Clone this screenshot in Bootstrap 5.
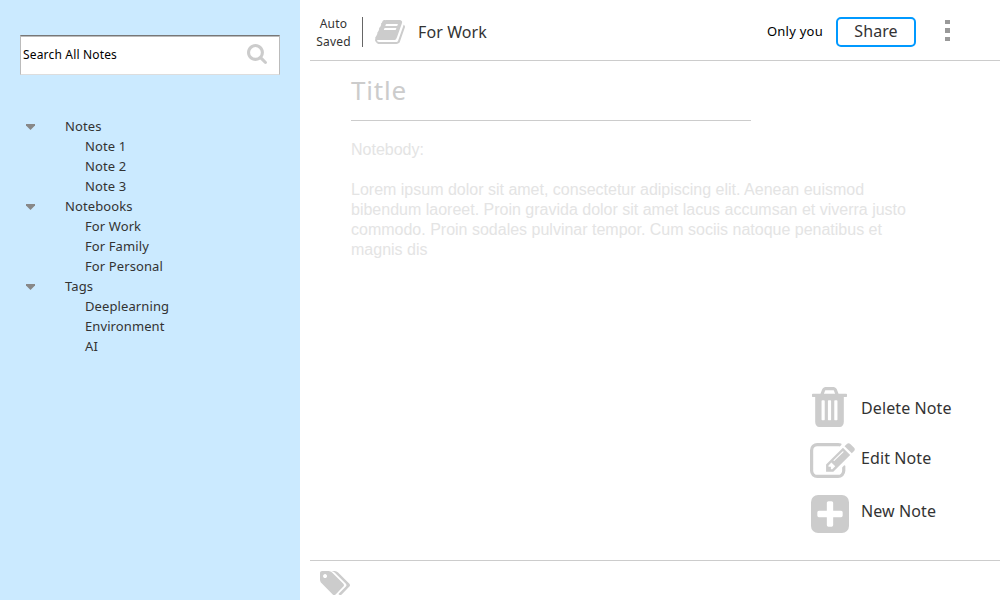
<!DOCTYPE html>
<html lang="en">
<head>
<meta charset="utf-8">
<meta name="viewport" content="width=device-width, initial-scale=1">
<title>Notes</title>
<link href="https://cdn.jsdelivr.net/npm/bootstrap@5.3.0/dist/css/bootstrap.min.css" rel="stylesheet">
<style>
body{font-family:"Noto Sans","Open Sans",sans-serif;font-size:13px;line-height:20px;color:#333;background:#fff}
svg{display:block;fill:#ccc;flex:none}
.sidebar{width:300px;background:#cbeaff;padding:35px 20px 0}
.search-box{height:40px;border:1px solid #bbb;border-top:1px solid #777;border-bottom-color:#ddd;padding:0 12px 2px 2px;box-shadow:inset 0 1px #bbb}
.search-box input{font-size:12px;letter-spacing:.17px;color:#000;outline:0;min-width:0;margin-top:2px}
.search-box input::placeholder{color:#000;opacity:1}
.tree{margin-top:41px;letter-spacing:.1px}
.tree summary{list-style:none;padding-left:45px;position:relative}
.tree summary::before{content:"";position:absolute;left:6px;top:8px;width:9px;height:6px;background:#888;clip-path:polygon(0 0,100% 0,100% 25%,50% 100%,0 25%)}
.tree li{padding-left:65px}
.workspace{margin-left:10px;min-width:0}
.topbar{height:61px;border-bottom:1px solid #ccc}
.autosave{width:47px;font-size:12px;line-height:18px;letter-spacing:.2px;padding-top:15px}
.rule{width:1px;height:30px;background:#666;margin:17px 12px 0 5px}
.book-ico{margin-top:20px}
.notebook{font-size:16px;margin:22px 0 0 13px;letter-spacing:.1px}
.only{font-size:13px;color:#000;margin-top:21px;letter-spacing:.25px}
.share{width:80px;height:30px;border:2px solid #09f!important;border-radius:5px;margin:17px 29px 0 13px;font-size:16px;line-height:24px;padding:0 0 2px;color:#333;letter-spacing:.1px}
.kebab{gap:4.2px;margin:20px 50px 0 0;width:5px}
.kebab i{height:4.3px;background:#999}
.page{padding-left:41px}
.title{width:400px;height:60px;border-bottom:1px solid #ccc;font-size:26px;font-weight:400;line-height:58px;color:#ccc;letter-spacing:.8px}
.note-text{width:570px;margin-top:19px;font-family:"Liberation Sans",sans-serif;font-size:16px;color:#e4e4e4}
.actions{margin:0 0 27px 500px;font-size:16px}
.action{color:#333;letter-spacing:.1px;text-align:left}
.ico{width:51px}
.trash-ico{margin-left:2px}
.plus-ico{margin-left:1px}
.delete-label{margin-top:11px}
.edit-label{margin-top:5px}
.new-label{margin-top:6px}
.action-new{margin-top:17px}
.tagbar{height:40px;border-top:1px solid #ccc;padding:10px}
</style>
</head>
<body class="d-flex vh-100 overflow-hidden">
<aside class="sidebar flex-shrink-0">
  <div class="search-box bg-white d-flex align-items-center">
    <input class="border-0 p-0 bg-transparent flex-grow-1" type="text" placeholder="Search All Notes">
    <svg width="20" height="20" viewBox="0 128 1664 1664"><path d="M1152 832q0-185-131.5-316.5T704 384 387.5 515.5 256 832t131.5 316.5T704 1280t316.5-131.5T1152 832zm512 832q0 52-38 90t-90 38q-54 0-90-38l-343-342q-179 124-399 124-143 0-273.5-55.5t-225-150-150-225T0 832t55.5-273.5 150-225 225-150T704 128t273.5 55.5 225 150 150 225T1408 832q0 220-124 399l343 343q37 37 37 90z"/></svg>
  </div>
  <nav class="tree">
    <details open><summary>Notes</summary><ul class="list-unstyled mb-0"><li>Note 1</li><li>Note 2</li><li>Note 3</li></ul></details>
    <details open><summary>Notebooks</summary><ul class="list-unstyled mb-0"><li>For Work</li><li>For Family</li><li>For Personal</li></ul></details>
    <details open><summary>Tags</summary><ul class="list-unstyled mb-0"><li>Deeplearning</li><li>Environment</li><li>AI</li></ul></details>
  </nav>
</aside>
<main class="workspace flex-grow-1 d-flex flex-column">
  <header class="topbar d-flex align-items-start">
    <div class="autosave text-center">Auto<br>Saved</div>
    <div class="rule"></div>
    <svg class="book-ico" width="30" height="24" viewBox="62 128 1668 1536" preserveAspectRatio="none"><path d="M1703 478q40 57 18 129l-275 906q-19 64-76.5 107.5t-122.5 43.5h-923q-77 0-148.5-53.5t-99.5-131.5q-24-67-2-127 0-4 3-27t4-37q1-8-3-21.5t-3-19.5q2-11 8-21t16.5-23.5 16.5-23.5q23-38 45-91.5t30-91.5q3-10 .5-30t-.5-28q3-11 17-28t17-23q21-36 42-92t25-90q1-9-2.5-32t.5-28q4-13 22-30.5t22-22.5q19-26 42.5-84.5t27.5-96.5q1-8-3-25.5t-2-26.5q2-8 9-18t18-23 17-21q8-12 16.5-30.5t15-35 16-36 19.5-32 26.5-23.5 36-11.5 47.5 5.5l-1 3q38-9 51-9h761q74 0 114 56t18 130l-274 906q-36 119-71.5 153.5t-128.5 34.5h-869q-27 0-38 15-11 16-1 43 24 70 144 70h923q29 0 56-15.5t35-41.5l300-987q7-22 5-57 38 15 59 43zm-1064 2q-4 13 2 22.5t20 9.5h608q13 0 25.5-9.5t16.5-22.5l21-64q4-13-2-22.5t-20-9.5h-608q-13 0-25.5 9.5t-16.5 22.5zm-83 256q-4 13 2 22.5t20 9.5h608q13 0 25.5-9.5t16.5-22.5l21-64q4-13-2-22.5t-20-9.5h-608q-13 0-25.5 9.5t-16.5 22.5z"/></svg>
    <div class="notebook">For Work</div>
    <div class="only ms-auto">Only you</div>
    <button class="share btn">Share</button>
    <div class="kebab d-flex flex-column"><i></i><i></i><i></i></div>
  </header>
  <section class="page flex-grow-1">
    <h1 class="title mb-0">Title</h1>
    <div class="note-text">Notebody:<br><br>Lorem ipsum dolor sit amet, consectetur adipiscing elit. Aenean euismod<br>bibendum laoreet. Proin gravida dolor sit amet lacus accumsan et viverra justo<br>commodo. Proin sodales pulvinar tempor. Cum sociis natoque penatibus et<br>magnis dis</div>
  </section>
  <div class="actions d-flex flex-column">
    <button class="action border-0 bg-transparent p-0 d-flex align-items-start"><span class="ico"><svg class="trash-ico" width="35" height="40" viewBox="0 128 1408 1536" preserveAspectRatio="none"><path d="M512 1376V672q0-14-9-23t-23-9h-64q-14 0-23 9t-9 23v704q0 14 9 23t23 9h64q14 0 23-9t9-23zm256 0V672q0-14-9-23t-23-9h-64q-14 0-23 9t-9 23v704q0 14 9 23t23 9h64q14 0 23-9t9-23zm256 0V672q0-14-9-23t-23-9h-64q-14 0-23 9t-9 23v704q0 14 9 23t23 9h64q14 0 23-9t9-23zM480 384h448l-48-117q-7-9-17-11H546q-10 2-17 11zm928 32v64q0 14-9 23t-23 9h-96v948q0 83-47 143.5t-113 60.5H288q-66 0-113-58.5T128 1464V512H32q-14 0-23-9t-9-23v-64q0-14 9-23t23-9h309l70-167q15-37 54-63t79-26h320q40 0 79 26t54 63l70 167h309q14 0 23 9t9 23z"/></svg></span><span class="delete-label">Delete Note</span></button>
    <button class="action border-0 bg-transparent p-0 mt-3 d-flex align-items-start"><span class="ico"><svg width="45" height="35" viewBox="0 128 1792 1408" preserveAspectRatio="none"><path d="M888 1184l116-116-152-152-116 116v56h96v96h56zm440-720q-16-16-33 1l-350 350q-17 17-1 33t33-1l350-350q17-17 1-33zm80 594v190q0 119-84.5 203.5t-203.5 84.5h-832q-119 0-203.5-84.5t-84.5-203.5v-832q0-119 84.5-203.5t203.5-84.5h832q63 0 117 25 15 7 18 23 3 17-9 29l-49 49q-14 14-32 8-23-6-45-6h-832q-66 0-113 47t-47 113v832q0 66 47 113t113 47h832q66 0 113-47t47-113v-126q0-13 9-22l64-64q15-15 35-7t20 29zm-96-738l288 288-672 672h-288v-288zm444 132l-92 92-288-288 92-92q28-28 68-28t68 28l152 152q28 28 28 68t-28 68z"/></svg></span><span class="edit-label">Edit Note</span></button>
    <button class="action action-new border-0 bg-transparent p-0 d-flex align-items-start"><span class="ico"><svg class="plus-ico" width="38" height="38" viewBox="128 128 1536 1536"><path d="M1408 960v-128q0-26-19-45t-45-19h-320v-320q0-26-19-45t-45-19h-128q-26 0-45 19t-19 45v320h-320q-26 0-45 19t-19 45v128q0 26 19 45t45 19h320v320q0 26 19 45t45 19h128q26 0 45-19t19-45v-320h320q26 0 45-19t19-45zm256-544v960q0 119-84.5 203.5t-203.5 84.5h-960q-119 0-203.5-84.5t-84.5-203.5v-960q0-119 84.5-203.5t203.5-84.5h960q119 0 203.5 84.5t84.5 203.5z"/></svg></span><span class="new-label">New Note</span></button>
  </div>
  <footer class="tagbar">
    <svg width="30" height="24" viewBox="-64 128 1899 1515" preserveAspectRatio="none"><path d="M384 448q0-53-37.5-90.5t-90.5-37.5-90.5 37.5-37.5 90.5 37.5 90.5 90.5 37.5 90.5-37.5 37.5-90.5zm1067 576q0 53-37 90l-491 492q-39 37-91 37-53 0-90-37l-715-716q-38-37-64.5-101t-26.5-117v-416q0-52 38-90t90-38h416q53 0 117 26.5t102 64.5l715 714q37 39 37 91zm384 0q0 53-37 90l-491 492q-39 37-91 37-36 0-59-14t-53-45l470-470q37-37 37-90 0-52-37-91l-715-714q-38-38-102-64.5t-117-26.5h224q53 0 117 26.5t102 64.5l715 714q37 39 37 91z"/></svg>
  </footer>
</main>
<script src="https://cdn.jsdelivr.net/npm/bootstrap@5.3.0/dist/js/bootstrap.bundle.min.js"></script>
</body>
</html>
